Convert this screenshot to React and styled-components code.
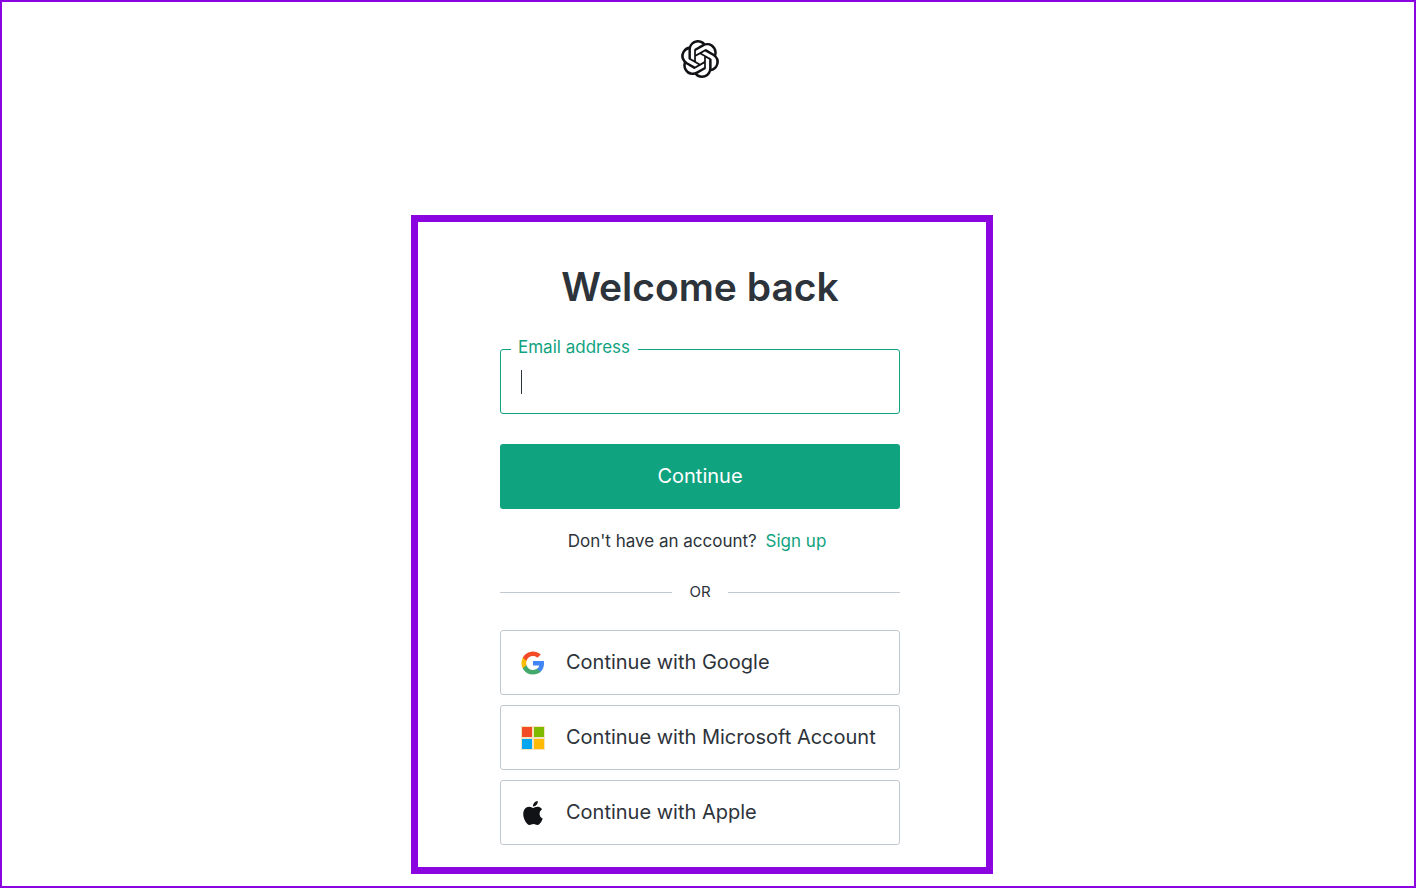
import React, {useState} from 'react'

import styled, {createGlobalStyle} from 'styled-components'
import {SiApple, SiOpenai} from 'react-icons/si'

const purple = '#8a05df'
const green = '#10a37f'
const ink = '#2d333a'
const line = '#c2c8d0'
const radius = '3px'
const controlHeight = '65px'

const GlobalStyle = createGlobalStyle`
  * {
    box-sizing: border-box;
  }
  body {
    margin: 0;
    background: #fff;
    color: ${ink};
    font-family: Inter, 'Liberation Sans', sans-serif;
  }
`
const Page = styled.div`
  display: flex;
  flex-direction: column;
  align-items: center;
  min-height: calc(100vh - 2px);
  border: 2px solid ${purple};
  padding: 38px 12px 12px 0;
`
const Header = styled.header`
  display: flex;
  padding-right: 4px;
  color: #101215;

  svg {
    width: 38px;
    height: 38px;
  }
`
const Card = styled.main`
  width: 100%;
  max-width: 582px;
  margin-top: 137px;
  border: 7px solid ${purple};
  padding: 40px 86px 22px 82px;
`
const Title = styled.h1`
  margin: 0;
  font-size: 39px;
  font-weight: 600;
  line-height: 50px;
  text-align: center;
  white-space: nowrap;
`
const Form = styled.form`
  display: flex;
  flex-direction: column;
  gap: 30px;
  margin-top: 37px;
`
const Field = styled.div`
  position: relative;
`
const Label = styled.label`
  position: absolute;
  top: -12px;
  left: 11px;
  padding: 0 8px 0 7px;
  background: #fff;
  color: ${green};
  font-size: 17px;
  line-height: 20px;
`
const Input = styled.input`
  display: block;
  width: 100%;
  height: ${controlHeight};
  border: 1px solid ${green};
  border-radius: ${radius};
  padding: 0 20px;
  outline: none;
  background: transparent;
  color: ${ink};
  caret-color: transparent;
  font: inherit;
  font-size: 20px;
`
const Caret = styled.span`
  position: absolute;
  top: 21px;
  left: 21px;
  width: 1px;
  height: 24px;
  background: ${ink};
  pointer-events: none;
`
const SubmitButton = styled.button`
  height: ${controlHeight};
  border: 0;
  border-radius: ${radius};
  padding: 0 0 2px;
  background: ${green};
  color: #fff;
  font: inherit;
  font-size: 20px;
  cursor: pointer;
`
const SignUp = styled.p`
  margin: 22px 6px 0 0;
  font-size: 17px;
  line-height: 20px;
  text-align: center;

  a {
    margin-left: 4px;
    color: ${green};
    text-decoration: none;
  }
`
const Divider = styled.div`
  display: flex;
  align-items: center;
  gap: 17px;
  margin: 31px 0 28px;
  font-size: 15px;
  line-height: 20px;

  &::before,
  &::after {
    content: '';
    flex: 1;
    height: 1px;
    background: ${line};
  }
`
const Providers = styled.div`
  display: flex;
  flex-direction: column;
  gap: 10px;
`
const ProviderButton = styled.button`
  display: flex;
  align-items: center;
  gap: 21px;
  height: ${controlHeight};
  border: 1px solid ${line};
  border-radius: ${radius};
  padding: 0 20px;
  background: #fff;
  color: ${ink};
  font: inherit;
  font-size: 20px;
  white-space: nowrap;
  cursor: pointer;

  svg {
    flex: none;
    width: 24px;
    height: 24px;
    color: #101215;
  }
`
const ProviderName = styled.span`
  padding-bottom: 2px;
`

const GoogleIcon = () => (
  <svg viewBox="-0.5 -0.5 25 25" aria-hidden="true">
    <path fill="#4285f4" d="M23.5 12.3c0-.8-.1-1.6-.2-2.3H12v4.5h6.5a5.6 5.6 0 0 1-2.4 3.6v3h3.9c2.2-2.1 3.5-5.1 3.5-8.8z" />
    <path fill="#43a86b" d="M12 24c3.2 0 6-1.1 8-2.9l-3.9-3c-1.1.7-2.5 1.2-4.1 1.2-3.1 0-5.8-2.1-6.7-5H1.3v3.1A12 12 0 0 0 12 24z" />
    <path fill="#fbbc05" d="M5.3 14.3a7.2 7.2 0 0 1 0-4.6V6.6h-4a12 12 0 0 0 0 10.8l4-3.1z" />
    <path fill="#f44b27" d="M12 4.8c1.8 0 3.4.6 4.6 1.8l3.5-3.4A12 12 0 0 0 1.3 6.6l4 3.1c.9-2.8 3.6-4.9 6.7-4.9z" />
  </svg>
)
const MicrosoftIcon = () => (
  <svg viewBox="0 0 24 24" aria-hidden="true">
    <path fill="#f5e3c0" d="M0 0h24v24H0z" />
    <path fill="#f44b27" d="M1 1h10v10H1z" />
    <path fill="#7fba00" d="M13 1h10v10H13z" />
    <path fill="#05a6f0" d="M1 13h10v10H1z" />
    <path fill="#ffba08" d="M13 13h10v10H13z" />
  </svg>
)

const providers = [
  {name: 'Google', Icon: GoogleIcon},
  {name: 'Microsoft Account', Icon: MicrosoftIcon},
  {name: 'Apple', Icon: SiApple},
]

const App = () => {
  const [email, setEmail] = useState('')

  return (
    <React.Fragment>
      <GlobalStyle />
      <Page>
        <Header>
          <SiOpenai aria-label="OpenAI" />
        </Header>
        <Card>
          <Title>Welcome back</Title>
          <Form onSubmit={e => e.preventDefault()}>
            <Field>
              <Input id="email" type="email" value={email} onChange={e => setEmail(e.target.value)} />
              <Label htmlFor="email">Email address</Label>
              {!email && <Caret />}
            </Field>
            <SubmitButton type="submit">Continue</SubmitButton>
          </Form>
          <SignUp>
            Don't have an account? <a href="#signup">Sign up</a>
          </SignUp>
          <Divider>OR</Divider>
          <Providers>
            {providers.map(({name, Icon}) => (
              <ProviderButton key={name} type="button">
                <Icon />
                <ProviderName>Continue with {name}</ProviderName>
              </ProviderButton>
            ))}
          </Providers>
        </Card>
      </Page>
    </React.Fragment>
  )
}

export default App
